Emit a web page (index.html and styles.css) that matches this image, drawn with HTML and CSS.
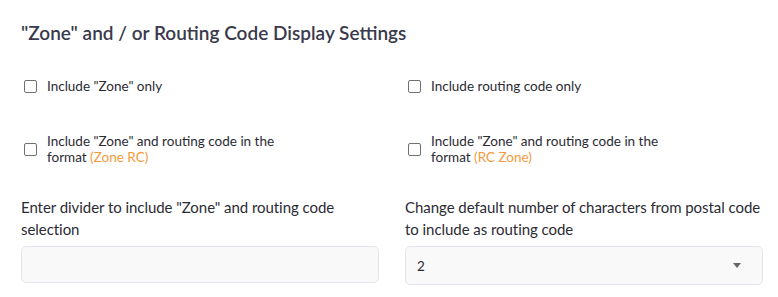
FILE: index.html
```html
<!DOCTYPE html>
<html>
<head>
  <meta charset="UTF-8">
  <title>Zone Settings</title>
  <link rel="stylesheet" href="styles.css">
</head>
<body>
  <div class="panel">
    <h2 class="panel-title">"Zone" and / or Routing Code Display Settings</h2>

    <div class="options">
      <label class="option">
        <span class="box"></span>
        <span class="option-text">Include "Zone" only</span>
      </label>
      <label class="option">
        <span class="box"></span>
        <span class="option-text">Include routing code only</span>
      </label>
      <label class="option">
        <span class="box"></span>
        <span class="option-text">Include "Zone" and routing code in the format <span class="accent">(Zone RC)</span></span>
      </label>
      <label class="option">
        <span class="box"></span>
        <span class="option-text">Include "Zone" and routing code in the format <span class="accent">(RC Zone)</span></span>
      </label>
    </div>

    <div class="fields">
      <div class="field">
        <div class="field-label">Enter divider to include "Zone" and routing code selection</div>
        <div class="input"></div>
      </div>
      <div class="field">
        <div class="field-label">Change default number of characters from postal code to include as routing code</div>
        <div class="select">
          <span>2</span>
          <span class="caret"></span>
        </div>
      </div>
    </div>
  </div>
</body>
</html>
```

FILE: styles.css
```css
body {
  margin: 0;
  background-color: #fff;
  font-family: Lato, "Open Sans", sans-serif;
  color: #2b2b33;
}

.panel {
  padding: 21px 15px 0 21px;
}

.panel-title {
  font-size: 19px;
  font-weight: 600;
  line-height: 24px;
  margin: 0;
  color: #3a3a4c;
}

.options {
  display: grid;
  grid-template-columns: 1fr 1fr;
  column-gap: 26px;
  row-gap: 23px;
  margin-top: 21px;
}

.option {
  display: flex;
  align-items: center;
  height: 40px;
  font-size: 13.5px;
  line-height: 16px;
  cursor: pointer;
}

.box {
  flex: none;
  width: 11px;
  height: 11px;
  border: 1.5px solid #707070;
  border-radius: 2px;
  margin-left: 2.5px;
  margin-right: 10.5px;
}

.option-text {
  max-width: 240px;
}

.accent {
  color: #f59a3c;
}

.fields {
  display: grid;
  grid-template-columns: 1fr 1fr;
  column-gap: 26px;
  margin-top: 27px;
}

.field-label {
  font-size: 15px;
  letter-spacing: -0.05px;
  line-height: 22px;
  margin-bottom: 6px;
}

.input,
.select {
  box-sizing: border-box;
  background-color: #f9f9fa;
  border: 1px solid #e4e3ee;
  border-radius: 5px;
}

.input {
  height: 37px;
}

.select {
  height: 39px;
  display: flex;
  align-items: center;
  justify-content: space-between;
  padding: 0 21px 0 11px;
  font-size: 13.5px;
}

.caret {
  width: 0;
  height: 0;
  border-left: 4px solid transparent;
  border-right: 4px solid transparent;
  border-top: 5px solid #666;
}
```
